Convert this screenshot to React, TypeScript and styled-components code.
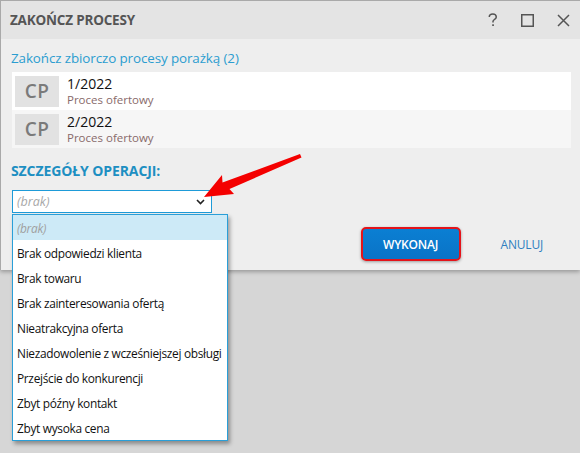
import React from "react";
import styled, { createGlobalStyle } from "styled-components";

const Global = createGlobalStyle`
  html, body { margin: 0; padding: 0; background: #d6d6d6; }
  body { font-family: "Open Sans", "Noto Sans", sans-serif; width: 580px; height: 453px; overflow: hidden; }
  #root { position: relative; width: 580px; height: 453px; }
`;

const Dialog = styled.div`
  position: relative;
  width: 579px;
  border-top: 1px solid #a9a9a9;
  border-left: 1px solid #a9a9a9;
  background: #eeeeee;
  box-shadow: 0 2px 4px rgba(0, 0, 0, 0.28);
`;

const TitleBar = styled.div`
  height: 38px;
  background: #e4e4e4;
  display: flex;
  align-items: center;
  padding-left: 9px;
  padding-right: 10px;
`;

const Title = styled.div`
  flex: 1;
  font-weight: 700;
  font-size: 13.5px;
  color: #555555;
  letter-spacing: -0.2px;
`;

const TitleIcons = styled.div`
  display: flex;
  align-items: center;
  gap: 23px;
  color: #555;
`;

const Body = styled.div`
  padding: 10px 9px 9px 10px;
`;

const Heading = styled.div`
  font-size: 13.4px;
  color: #2b9dd0;
  line-height: 18px;
  letter-spacing: -0.1px;
`;

const List = styled.div`
  margin-top: 5px;
  margin-left: 1px;
  display: flex;
  flex-direction: column;
`;

const Row = styled.div<{ $alt?: boolean }>`
  height: 38px;
  background: ${(p) => (p.$alt ? "#f6f6f6" : "#ffffff")};
  display: flex;
  align-items: center;
  padding-left: 3px;
  gap: 8px;
`;

const Avatar = styled.div`
  width: 44px;
  height: 31px;
  background: #e2e2e2;
  color: #7a7a7a;
  font-weight: 600;
  font-size: 19px;
  display: flex;
  align-items: center;
  justify-content: center;
  letter-spacing: 0.5px;
`;

const RowText = styled.div`
  display: flex;
  flex-direction: column;
`;

const RowTitle = styled.div`
  font-size: 14px;
  color: #111;
  line-height: 17px;
`;

const RowSub = styled.div`
  font-size: 11.5px;
  color: #886a6a;
  line-height: 15px;
`;

const SectionLabel = styled.div`
  margin-top: 14px;
  font-weight: 700;
  font-size: 14px;
  color: #1d8fc2;
  letter-spacing: -0.1px;
  line-height: 18px;
`;

const Select = styled.div`
  margin-top: 10px;
  margin-left: 1px;
  width: 200px;
  height: 23px;
  box-sizing: border-box;
  border: 1px solid #1e9bd8;
  background: #fff;
  display: flex;
  align-items: center;
  padding: 0 6px 0 4px;
`;

const Placeholder = styled.span`
  flex: 1;
  font-style: italic;
  font-size: 12.5px;
  color: #a8a8a8;
`;

const Footer = styled.div`
  display: flex;
  justify-content: flex-end;
  align-items: center;
  margin-top: 14px;
  padding-right: 28px;
  gap: 40px;
`;

const PrimaryButton = styled.button`
  width: 100px;
  height: 34px;
  border: 2px solid #e4141a;
  border-radius: 5px;
  background: linear-gradient(#0b7fd3, #0a73c6);
  color: #fff;
  font-family: inherit;
  font-weight: 600;
  font-size: 12px;
  letter-spacing: -0.2px;
  box-shadow: 0 1px 3px rgba(0, 0, 0, 0.35);
  padding: 0;
`;

const LinkButton = styled.button`
  border: none;
  background: none;
  padding: 0;
  color: #2f7fc0;
  font-family: inherit;
  font-weight: 500;
  font-size: 12px;
  letter-spacing: -0.2px;
`;

const Dropdown = styled.div`
  position: absolute;
  left: 12px;
  top: 214px;
  width: 216px;
  box-sizing: border-box;
  border: 1px solid #2a9fd8;
  background: #fff;
  box-shadow: 2px 3px 4px rgba(0, 0, 0, 0.35);
  display: flex;
  flex-direction: column;
`;

const Option = styled.div<{ $selected?: boolean; $muted?: boolean }>`
  height: 25px;
  display: flex;
  align-items: center;
  padding-left: 4px;
  font-size: 11.9px;
  letter-spacing: -0.32px;
  background: ${(p) => (p.$selected ? "#cdeaf7" : "transparent")};
  color: ${(p) => (p.$muted ? "#a0a0a0" : "#111")};
  font-style: ${(p) => (p.$muted ? "italic" : "normal")};
  white-space: nowrap;
`;

const ArrowOverlay = styled.svg`
  position: absolute;
  left: 0;
  top: 0;
  pointer-events: none;
`;

const options = [
  "Brak odpowiedzi klienta",
  "Brak towaru",
  "Brak zainteresowania ofertą",
  "Nieatrakcyjna oferta",
  "Niezadowolenie z wcześniejszej obsługi",
  "Przejście do konkurencji",
  "Zbyt późny kontakt",
  "Zbyt wysoka cena",
];

export default function App() {
  return (
    <>
      <Global />
      <Dialog>
        <TitleBar>
          <Title>ZAKOŃCZ PROCESY</Title>
          <TitleIcons>
            <svg width="10" height="14" viewBox="0 0 10 14">
              <path d="M1.3 4C1.3 2.1 2.8 1.1 4.9 1.1s3.4 1.1 3.4 2.8c0 1.5-1 2.1-2 2.7-.9.5-1.3 1-1.3 2v.8" fill="none" stroke="#555" strokeWidth="1.5" />
              <rect x="4.2" y="11.3" width="1.7" height="1.7" fill="#555" />
            </svg>
            <svg width="13" height="13" viewBox="0 0 13 13">
              <rect x="0.75" y="0.75" width="11.5" height="11.5" fill="none" stroke="#555" strokeWidth="1.5" />
            </svg>
            <svg width="13" height="13" viewBox="0 0 13 13">
              <path d="M1 1L12 12M12 1L1 12" stroke="#555" strokeWidth="1.5" />
            </svg>
          </TitleIcons>
        </TitleBar>
        <Body>
          <Heading>Zakończ zbiorczo procesy porażką (2)</Heading>
          <List>
            <Row>
              <Avatar>CP</Avatar>
              <RowText>
                <RowTitle>1/2022</RowTitle>
                <RowSub>Proces ofertowy</RowSub>
              </RowText>
            </Row>
            <Row $alt>
              <Avatar>CP</Avatar>
              <RowText>
                <RowTitle>2/2022</RowTitle>
                <RowSub>Proces ofertowy</RowSub>
              </RowText>
            </Row>
          </List>
          <SectionLabel>SZCZEGÓŁY OPERACJI:</SectionLabel>
          <Select>
            <Placeholder>(brak)</Placeholder>
            <svg width="9" height="6" viewBox="0 0 9 6">
              <path d="M1 1L4.5 4.5L8 1" fill="none" stroke="#222" strokeWidth="1.6" />
            </svg>
          </Select>
          <Footer>
            <PrimaryButton>WYKONAJ</PrimaryButton>
            <LinkButton>ANULUJ</LinkButton>
          </Footer>
        </Body>
      </Dialog>
      <Dropdown>
        <Option $selected $muted>(brak)</Option>
        {options.map((o) => (
          <Option key={o}>{o}</Option>
        ))}
      </Dropdown>
      <ArrowOverlay width="580" height="453" viewBox="0 0 580 453">
        <path
          d="M204 197 L222 175 L222.5 182.5 L300 154 L301.5 157.5 L229.5 189 L234 194 Z"
          fill="#f40000"
        />
      </ArrowOverlay>
    </>
  );
}
